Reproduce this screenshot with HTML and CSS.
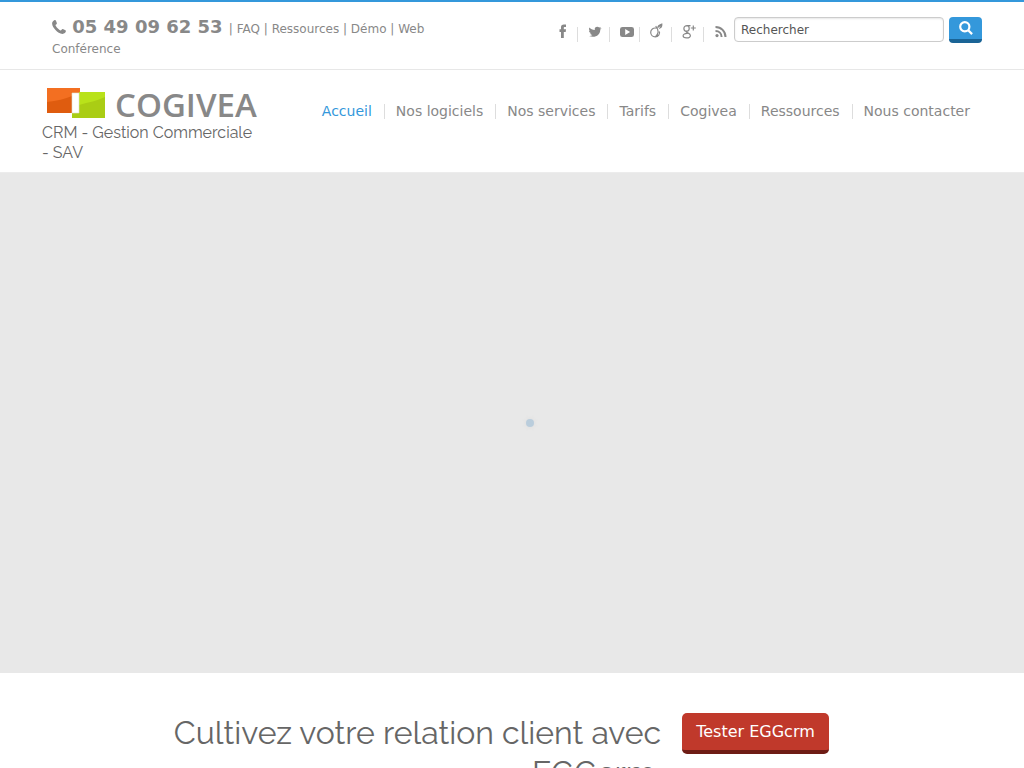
FILE: index.html
```html
<!DOCTYPE html>
<html lang="fr">
<head>
<meta charset="utf-8">
<meta name="viewport" content="width=device-width, initial-scale=1">
<title>Cogivea</title>
<link rel="stylesheet" href="styles.css">
</head>
<body>
<div class="topbar">
  <div class="container topbar-inner">
    <div class="contact">
      <strong class="number"><svg class="phone" viewBox="0 0 14 14" aria-hidden="true"><path d="M1 1.200C1.800.5 2.800 0 3.300.1c.6.2 1.500 2.600 1.600 3.300.1.8-1.500 1.200-1.400 1.900.2 1.300 3.800 5 5.200 5.200.7.1 1.100-1.500 1.900-1.400.7.1 3.100 1.100 3.300 1.700.1.6-.3 1.600-1 2.300C10 15.300 5.800 12.400 3.500 9.900 1.200 7.600-1.300 3.600 1 1.200z"/></svg> 05 49 09 62 53 </strong>| <a href="#">FAQ</a> | <a href="#">Ressources</a> | <a href="#">Démo</a> | <a href="#">Web Conférence</a>
    </div>
    <div class="tools">
      <ul class="social">
        <li><a href="#" aria-label="Facebook"><svg viewBox="0 0 16 16"><path d="M6 15V9H4.500V6.300H6V4.500C6 2.200 7 1.500 8.900 1.500H11V4H9.800c-.8 0-1 .3-1 1v1.300H11L10.700 9H8.800v6z"/></svg></a></li>
        <li><a href="#" aria-label="Twitter"><svg viewBox="0 0 16 16"><path d="M14.500 5.200c-.3.500-.7.900-1.200 1.200 0 5.400-4.700 8.800-11.300 6.700 1.300 0 2.400-.3 3.400-1.100-1.100-.1-1.900-.7-2.300-1.700h1C2.800 9.900 2 9 2 7.600l1 .3C2 7.100 1.700 5.700 2.400 4.500c1.300 1.500 3 2.300 5.400 2.500C7.300 5 8.700 3.800 10.300 3.800c.8 0 1.400.3 1.900.8l1.700-.5-1.100 1.400z"/></svg></a></li>
        <li><a href="#" aria-label="YouTube"><svg viewBox="0 0 16 16"><path fill-rule="evenodd" d="M3.500 4h9Q15 4 15 6.300v5.400Q15 14 12.500 14h-9Q1 14 1 11.700V6.300Q1 4 3.500 4zM6.200 6v6l4.900-3z"/></svg></a></li>
        <li><a href="#" aria-label="Viadeo"><svg viewBox="0 0 16 16"><path class="line" d="M7.500 5.200C4.200 4.400 1.700 6.600 1.700 9.300c0 2.700 2 4.500 4.500 4.500 3.200 0 5-2.600 4.200-5.300M6.700 3c2.800 3.500 3.200 7.600-.2 10.700"/><path d="M8.300 5.500C7.800 3 9.700 1.200 13.300.2c.5 3.300-.8 5.500-3.600 5.500l2-2.800z"/></svg></a></li>
        <li><a href="#" aria-label="Google+"><svg viewBox="0 0 16 16"><path class="line" d="M9.500 2.600H6.200C4.200 2.600 2.900 3.800 2.900 5.400S4 8.200 5.500 8.200s2.700-1.100 2.700-2.800-.8-2.800-2.200-2.800M5.500 8.200C4 9.600 9.400 10 9.400 12.400c0 1.500-1.600 2.500-3.800 2.500-2.100 0-3.500-.8-3.500-2.100 0-1.700 2-2.500 4.700-2.300M9.800 5h5M12.300 2.500v5"/></svg></a></li>
        <li><a href="#" aria-label="RSS"><svg viewBox="0 0 16 16"><circle cx="4" cy="12.600" r="1.600"/><path class="thick" d="M2.500 8c3.500 0 6.100 2.600 6.100 6.100M2.500 4c5.700 0 10 4.300 10 10"/></svg></a></li>
      </ul>
      <form class="search">
        <input class="search-input" type="text" aria-label="Rechercher" value="Rechercher">
        <button class="search-button" type="button" aria-label="Lancer la recherche"><svg viewBox="0 0 14 14"><circle cx="5.800" cy="5.800" r="4.600"/><path d="M9.200 9.200l3.900 3.900"/></svg></button>
      </form>
    </div>
  </div>
</div>
<header class="header">
  <div class="container header-inner">
    <div class="brand">
      <a href="#" class="logo" aria-label="Cogivea">
        <svg class="mark" viewBox="0 0 60 32">
          <path fill="#f36f21" d="M1 1h33v6h-7v19H1z"/><path fill="#df5c0f" d="M1 15c10-1 18-3 25-6v17H1z"/>
          <path fill="#b9e21a" d="M33 5h26v26H26v-5h7z"/><path fill="#aacd14" d="M33 18c10-3 18-4 26-8v21H26v-5h7z"/>
          <path fill="#fff" stroke="#e0ddd0" stroke-width=".6" d="M26 6h7v20h-7z"/>
        </svg>
        <span class="wordmark">COGIVEA</span>
      </a>
      <p class="tagline">CRM - Gestion Commerciale - SAV</p>
    </div>
    <nav class="nav">
      <a class="active" href="#">Accueil</a><a href="#">Nos logiciels</a><a href="#">Nos services</a><a href="#">Tarifs</a><a href="#">Cogivea</a><a href="#">Ressources</a><a href="#">Nous contacter</a>
    </nav>
  </div>
</header>
<section class="slider" aria-label="Chargement"><span class="loader"></span></section>
<section class="promo">
  <h1 class="promo-title">Cultivez votre relation client avec EGGcrm.</h1>
  <button class="promo-button" type="button">Tester EGGcrm</button>
</section>
</body>
</html>
```

FILE: styles.css
```css
* { box-sizing: border-box; }
body {
  margin: 0;
  background: #fff;
  color: #888;
  font: 12px/20px "DejaVu Sans", sans-serif;
}
a { color: inherit; text-decoration: none; }
.container { max-width: 940px; margin: 0 auto; }
.topbar {
  border-top: 2px solid #3498db;
  border-bottom: 1px solid #e7e7e7;
}
.topbar-inner {
  display: flex;
  justify-content: space-between;
  padding: 15px 0 10px 10px;
}
.contact { max-width: 384px; }
.phone { width: 14px; height: 14px; fill: #888; vertical-align: -1px; }
.number { font-size: 18px; }
.tools { display: flex; }
.social {
  display: flex;
  margin: 0;
  padding: 6px 0 0;
  list-style: none;
}
.social li { display: flex; width: 32px; height: 20px; }
.social li + li::before {
  content: "";
  width: 1px;
  height: 15px;
  margin: 4px 9px 0 0;
  background: #ddd;
}
.social li:first-child { width: 22px; }
.social li:nth-child(3) { width: 30px; }
.social li:last-child { width: 31px; }
.social a { display: flex; }
.social svg { width: 16px; height: 16px; fill: #888; }
.social .line, .social .thick { fill: none; stroke: #888; stroke-width: 1.2; }
.social .thick { stroke-width: 2; }
.search { display: flex; align-items: flex-start; gap: 5px; }
.search-input {
  width: 210px;
  height: 25px;
  padding: 0 6px;
  border: 1px solid #ccc;
  border-radius: 4px;
  box-shadow: inset 0 1px 2px #e7e7e7;
  color: #555;
  font: inherit;
}
.search-button {
  display: flex;
  justify-content: center;
  width: 33px;
  height: 26px;
  padding: 4px 0 0;
  border: 0;
  border-bottom: 4px solid #1a6496;
  border-radius: 4px;
  background: #3498db;
}
.search-button svg {
  width: 14px;
  height: 14px;
  fill: none;
  stroke: #fff;
  stroke-width: 2.2;
}
.header { border-bottom: 1px solid #ececec; }
.header-inner {
  display: flex;
  align-items: flex-start;
  justify-content: space-between;
  padding: 16px 0 9px;
}
.brand { width: 220px; }
.logo { display: flex; gap: 9px; padding-left: 4px; height: 37px; }
.mark { flex: none; width: 60px; height: 32px; margin-top: 1px; }
.wordmark {
  color: #888;
  font: 600 33px/38px "Open Sans", sans-serif;
}
.tagline {
  margin: 0;
  color: #666;
  font: 16px/20px Raleway, Lato, sans-serif;
}
.nav { display: flex; padding: 18px 12px 0 0; font-size: 14px; line-height: 15px; }
.nav a + a { margin-left: 12px; padding-left: 11px; border-left: 1px solid #ddd; }
.nav .active { color: #3498db; }
.slider {
  display: flex;
  align-items: center;
  justify-content: center;
  height: 500px;
  padding-left: 36px;
  background: #e8e8e8;
}
.loader {
  width: 8px;
  height: 8px;
  border-radius: 50%;
  background: #bacddc;
  box-shadow: 0 0 5px #ddd;
}
.promo {
  display: flex;
  align-items: flex-start;
  justify-content: center;
  gap: 21px;
  padding: 40px 24px 60px 0;
}
.promo-title {
  max-width: 490px;
  margin: 0;
  color: #666;
  font: 400 32px/40px Raleway, Lato, sans-serif;
  text-align: right;
}
.promo-button {
  padding: 9px 14px 8px;
  border: 0;
  border-bottom: 4px solid #6e1c15;
  border-radius: 5px;
  background: #c0392b;
  color: #fff;
  font: 16px/20px "DejaVu Sans", sans-serif;
}
```
